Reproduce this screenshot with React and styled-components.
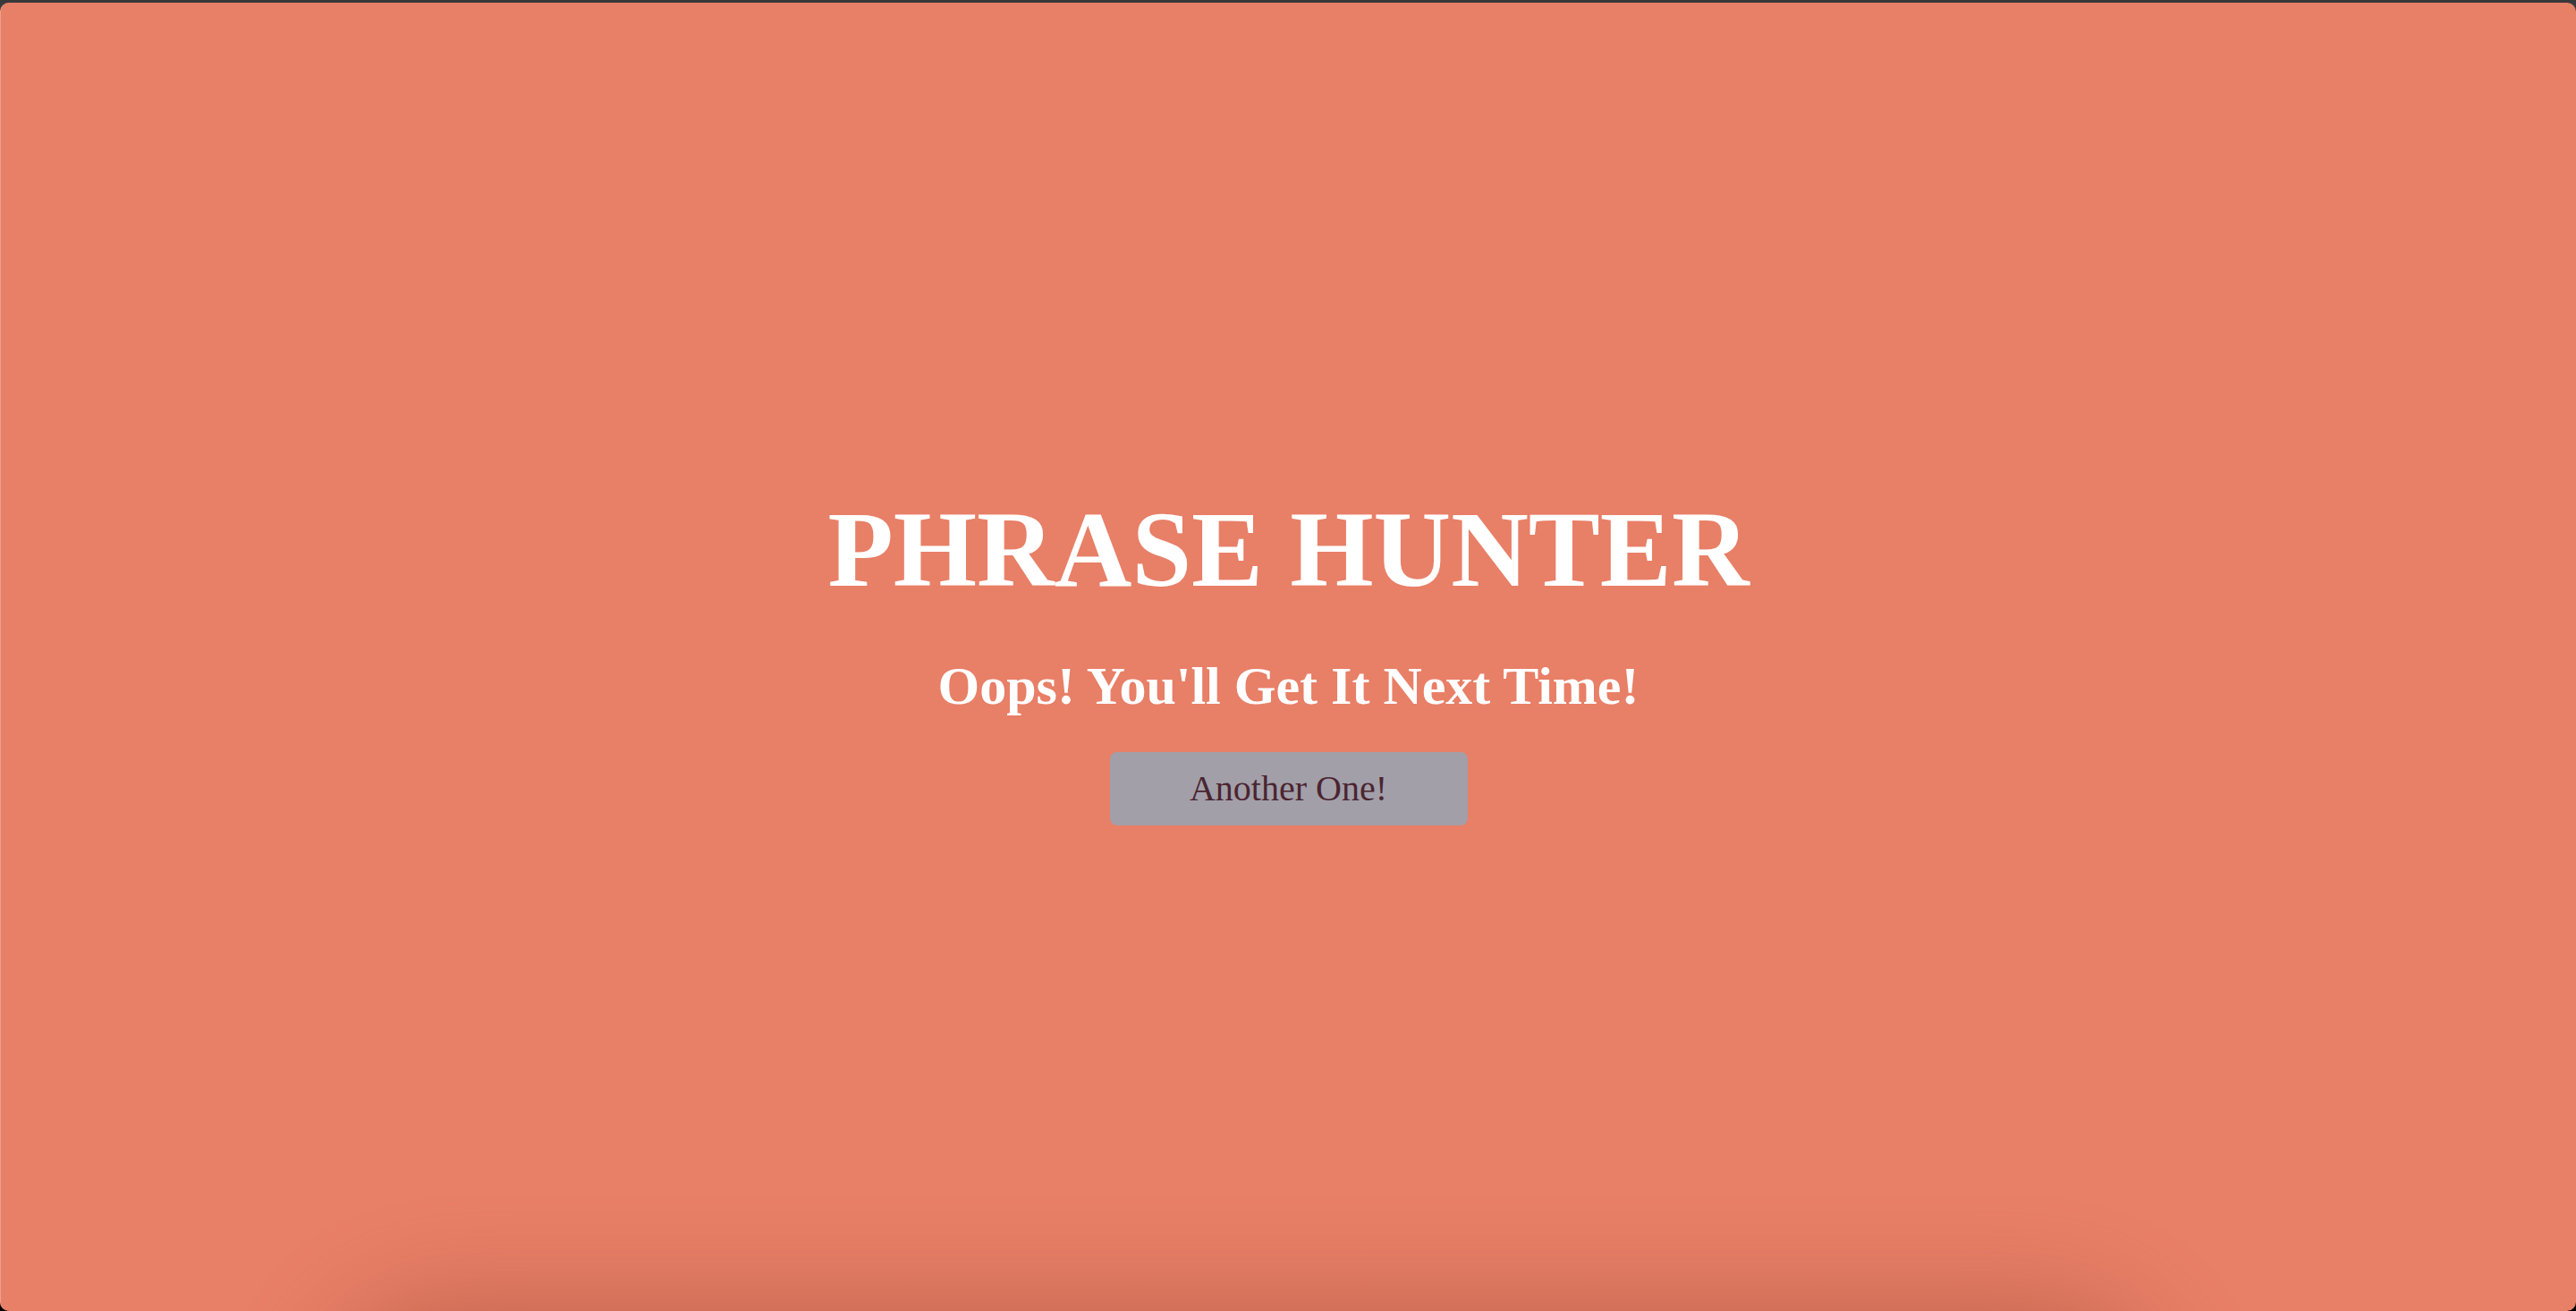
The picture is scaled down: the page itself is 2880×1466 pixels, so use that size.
import React from 'react';
import styled, { createGlobalStyle } from 'styled-components';

const GlobalStyle = createGlobalStyle`
  html, body {
    margin: 0;
    padding: 0;
    background: #1c1c1e;
  }
  #root {
    height: 1466px;
  }
`;

const Screen = styled.div`
  height: 100%;
  display: flex;
  flex-direction: column;
  background: linear-gradient(180deg, #3a3a3c 0, #3a3a3c 20px, #000 20px);
  border-top: 3px solid #38383a;
  box-sizing: border-box;
`;

const Overlay = styled.div`
  position: relative;
  flex: 1;
  display: flex;
  flex-direction: column;
  align-items: center;
  justify-content: center;
  padding-bottom: 4px;
  background: #e87f67;
  border-radius: 10px;
  border-left: 1px solid #f0a08c;
  overflow: hidden;
  font-family: "Liberation Serif", "Times New Roman", serif;
`;

const BoardShadow = styled.div`
  position: absolute;
  left: 400px;
  right: 500px;
  top: calc(100% + 30px);
  height: 200px;
  border-radius: 120px;
  box-shadow: 0 0 110px 40px rgba(150, 70, 50, 0.45);
`;

const Title = styled.h2`
  margin: 0;
  font-size: 120px;
  line-height: 1.2;
  font-weight: bold;
  color: #ffffff;
`;

const Message = styled.h1`
  margin: 44px 0 0;
  font-size: 60px;
  line-height: 1.2;
  font-weight: bold;
  color: #ffffff;
`;

const ResetButton = styled.button`
  margin-top: 38px;
  width: 400px;
  height: 82px;
  border: none;
  border-radius: 8px;
  background: #a29fa9;
  color: #4a2530;
  font-family: "Liberation Serif", "Times New Roman", serif;
  font-size: 40px;
  cursor: pointer;
`;

const App = () => {
  return (
    <>
      <GlobalStyle />
      <Screen>
        <Overlay>
          <Title>PHRASE HUNTER</Title>
          <Message>Oops! You'll Get It Next Time!</Message>
          <ResetButton>Another One!</ResetButton>
          <BoardShadow />
        </Overlay>
      </Screen>
    </>
  );
};

export default App;
